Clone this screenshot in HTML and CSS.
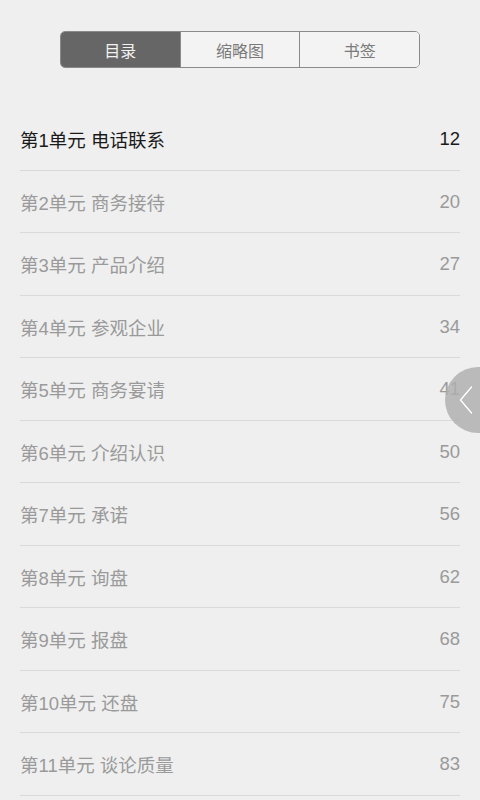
FILE: index.html
```html
<!DOCTYPE html>
<html lang="zh">
<head>
<meta charset="utf-8">
<link rel="stylesheet" href="styles.css">
</head>
<body>
<div class="page">
  <div class="tabs">
    <div class="tab active">目录</div>
    <div class="tab">缩略图</div>
    <div class="tab">书签</div>
  </div>
  <ul class="toc">
    <li class="row current"><span>第1单元 电话联系</span><span>12</span></li>
    <li class="row"><span>第2单元 商务接待</span><span>20</span></li>
    <li class="row"><span>第3单元 产品介绍</span><span>27</span></li>
    <li class="row"><span>第4单元 参观企业</span><span>34</span></li>
    <li class="row"><span>第5单元 商务宴请</span><span>41</span></li>
    <li class="row"><span>第6单元 介绍认识</span><span>50</span></li>
    <li class="row"><span>第7单元 承诺</span><span>56</span></li>
    <li class="row"><span>第8单元 询盘</span><span>62</span></li>
    <li class="row"><span>第9单元 报盘</span><span>68</span></li>
    <li class="row"><span>第10单元 还盘</span><span>75</span></li>
    <li class="row"><span>第11单元 谈论质量</span><span>83</span></li>
  </ul>
  <div class="side-btn">
    <svg width="14" height="30" viewBox="0 0 14 30"><path d="M12.5 2 L1.5 15 L12.5 28" fill="none" stroke="#fff" stroke-width="1.4" stroke-linejoin="round" stroke-linecap="round"/></svg>
  </div>
</div>
</body>
</html>
```

FILE: styles.css
```css
html, body {
  margin: 0;
  padding: 0;
  background: #efefef;
  overflow: hidden;
}
body {
  font-family: "Liberation Sans", "Noto Sans CJK SC", sans-serif;
}
.page {
  position: relative;
  width: 480px;
  height: 800px;
  overflow: hidden;
}
.tabs {
  display: flex;
  width: 358px;
  height: 35px;
  margin: 31px auto 0;
  border: 1px solid #8a8a8a;
  border-radius: 5px;
  overflow: hidden;
  box-sizing: content-box;
}
.tab {
  flex: 1;
  display: flex;
  align-items: center;
  justify-content: center;
  font-size: 16px;
  color: #7a7a7a;
  background: #f3f3f3;
  border-left: 1px solid #8a8a8a;
}
.tab:first-child {
  border-left: none;
}
.tab.active {
  background: #666666;
  color: #f2f2f2;
}
.toc {
  list-style: none;
  margin: 40px 20px 0;
  padding: 0;
}
.row {
  display: flex;
  justify-content: space-between;
  align-items: center;
  height: 60.5px;
  border-bottom: 1px solid #d9d9d9;
  font-size: 18.5px;
  color: #9a9a9a;
  padding-top: 1px;
  box-sizing: content-box;
}
.row.current {
  color: #1a1a1a;
}
.side-btn {
  position: absolute;
  left: 445px;
  top: 367px;
  width: 66px;
  height: 66px;
  border-radius: 50%;
  background: rgba(175,175,175,0.82);
  display: flex;
  align-items: center;
  padding-left: 14px;
  box-sizing: border-box;
}
```
